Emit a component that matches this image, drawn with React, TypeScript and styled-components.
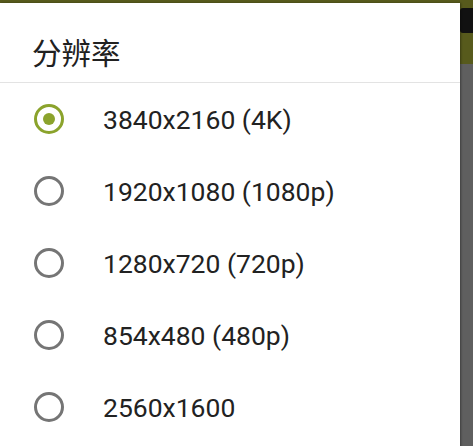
import React, { useState } from 'react';
import styled, { createGlobalStyle } from 'styled-components';

const GlobalStyle = createGlobalStyle`
  html, body {
    margin: 0;
    padding: 0;
    width: 100%;
    height: 100%;
    overflow: hidden;
  }
  body {
    font-family: Roboto, "Noto Sans CJK SC", sans-serif;
    background: #5f5f5f;
  }
`;

const Screen = styled.div`
  position: relative;
  width: 473px;
  height: 446px;
  display: flex;
  flex-direction: column;
  overflow: hidden;
`;

const AppBar = styled.div`
  height: 64px;
  background: #575a1c;
  display: flex;
  justify-content: flex-end;
  padding-top: 8px;
  box-sizing: border-box;
`;

const BarButton = styled.div`
  width: 13px;
  height: 25px;
  background: #111111;
  border-radius: 3px 0 0 3px;
`;

const Content = styled.div`
  flex: 1;
  background: #5f5f5f;
`;

const Dialog = styled.div`
  position: absolute;
  top: 3px;
  left: 0;
  width: 460px;
  bottom: -40px;
  background: #ffffff;
  box-shadow: 1px 0 2px rgba(0, 0, 0, 0.35);
  display: flex;
  flex-direction: column;
`;

const Title = styled.h2`
  margin: 0;
  height: 80px;
  box-sizing: border-box;
  padding: 17px 0 0 32px;
  display: flex;
  align-items: center;
  font-family: "Noto Sans CJK SC", sans-serif;
  font-size: 29.5px;
  font-weight: 400;
  color: #212121;
  border-bottom: 1px solid #e3e3e3;
`;

const OptionList = styled.div`
  display: flex;
  flex-direction: column;
`;

const Option = styled.label`
  height: 72px;
  display: flex;
  align-items: center;
  padding-left: 34px;
  cursor: pointer;
`;

const Radio = styled.span<{ $checked: boolean }>`
  width: 30px;
  height: 30px;
  box-sizing: border-box;
  border-radius: 50%;
  border: 3px solid ${p => (p.$checked ? '#8ba32c' : '#757575')};
  display: flex;
  align-items: center;
  justify-content: center;
  flex-shrink: 0;

  &::after {
    content: '';
    width: 12px;
    height: 12px;
    border-radius: 50%;
    background: #8ba32c;
    display: ${p => (p.$checked ? 'block' : 'none')};
  }
`;

const OptionText = styled.span`
  margin-left: 39px;
  font-family: Roboto, sans-serif;
  font-size: 26.5px;
  color: #222222;
`;

const resolutions = [
  '3840x2160 (4K)',
  '1920x1080 (1080p)',
  '1280x720 (720p)',
  '854x480 (480p)',
  '2560x1600',
];

const App: React.FC = () => {
  const [selected, setSelected] = useState(0);

  return (
    <Screen>
      <GlobalStyle />
      <AppBar>
        <BarButton />
      </AppBar>
      <Content />
      <Dialog>
        <Title>分辨率</Title>
        <OptionList>
          {resolutions.map((r, i) => (
            <Option key={r} onClick={() => setSelected(i)}>
              <Radio $checked={selected === i} />
              <OptionText>{r}</OptionText>
            </Option>
          ))}
        </OptionList>
      </Dialog>
    </Screen>
  );
};

export default App;
